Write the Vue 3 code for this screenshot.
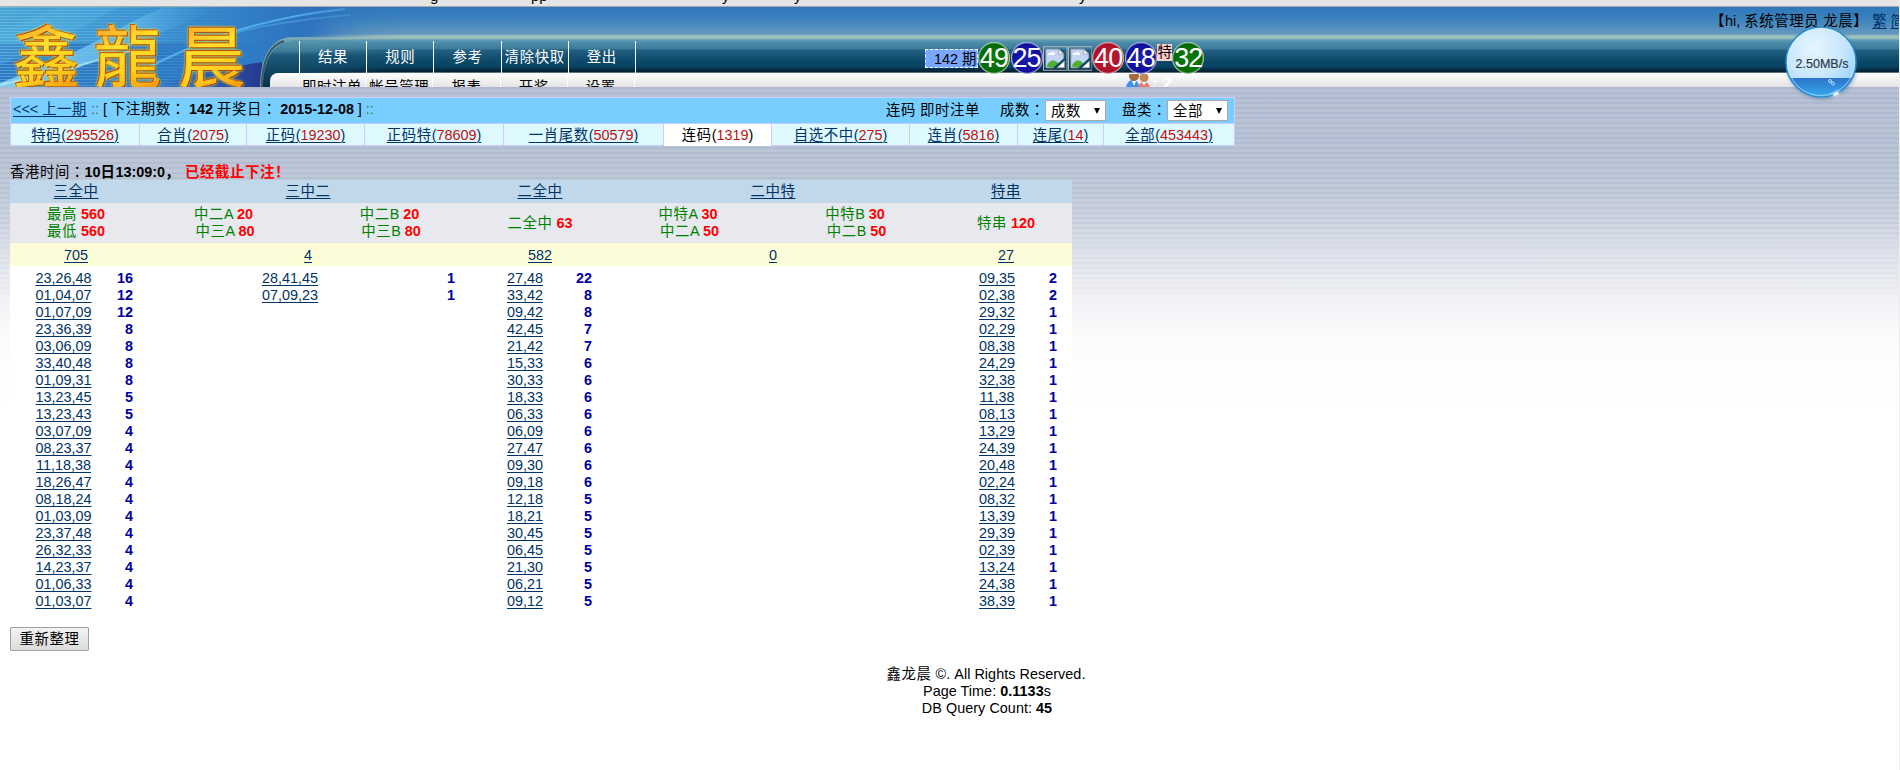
<script setup>
import { h } from 'vue'

// Wraps runs of Chinese characters so that they get their own tracking; colons sit mid-cell.
const T = (props) =>
  props.s.split(/(：|[\u2e80-\u9fff\uff00-\uff19\uff1b-\uffef]+)/).filter(Boolean).map((run) =>
    run === '：' ? h('span', { class: 'zh colon' }, run)
      : /[\u2e80-\uffef]/.test(run) ? h('span', { class: 'zh' }, run) : run
  )
T.props = ['s']

const nav = ['结果', '规则', '参考', '清除快取', '登出']
const subnav = ['即时注单', '帐号管理', '报表', '开奖', '设置']

const balls = [
  { n: '49', c: 'green' }, { n: '25', c: 'blue' }, { broken: true }, { broken: true },
  { n: '40', c: 'red' }, { n: '48', c: 'blue' }, { special: true }, { n: '32', c: 'green' },
]

const tabs = [
  ['特码', 295526], ['合肖', 2075], ['正码', 19230], ['正码特', 78609], ['一肖尾数', 50579],
  ['连码', 1319], ['自选不中', 275], ['连肖', 5816], ['连尾', 14], ['全部', 453443],
]

const heads = [['三全中', '705'], ['三中二', '4'], ['二全中', '582'], ['二中特', '0'], ['特串', '27']]

const odds = [
  [[['最高', 560], ['最低', 560]]],
  [[['中二A', 20], ['中三A', 80]], [['中二B', 20], ['中三B', 80]]],
  [[['二全中', 63]]],
  [[['中特A', 30], ['中二A', 50]], [['中特B', 30], ['中二B', 50]]],
  [[['特串', 120]]],
]

const pairs = (s) => s.split(' ').map((p) => p.split('='))
const lists = [
  pairs('23,26,48=16 01,04,07=12 01,07,09=12 23,36,39=8 03,06,09=8 33,40,48=8 01,09,31=8 13,23,45=5 13,23,43=5 03,07,09=4 08,23,37=4 11,18,38=4 18,26,47=4 08,18,24=4 01,03,09=4 23,37,48=4 26,32,33=4 14,23,37=4 01,06,33=4 01,03,07=4'),
  pairs('28,41,45=1 07,09,23=1'),
  pairs('27,48=22 33,42=8 09,42=8 42,45=7 21,42=7 15,33=6 30,33=6 18,33=6 06,33=6 06,09=6 27,47=6 09,30=6 09,18=6 12,18=5 18,21=5 30,45=5 06,45=5 21,30=5 06,21=5 09,12=5'),
  [],
  pairs('09,35=2 02,38=2 29,32=1 02,29=1 08,38=1 24,29=1 32,38=1 11,38=1 08,13=1 13,29=1 24,39=1 20,48=1 02,24=1 08,32=1 13,39=1 29,39=1 02,39=1 13,24=1 24,38=1 38,39=1'),
]
</script>

<template>
  <div class="page">
    <div class="chrome">
      <svg width="1900" height="6" class="remnant">
        <text x="430" y="1">g</text><text x="531" y="1">pp</text>
        <text x="722" y="1">y</text><text x="794" y="1">y</text><text x="1079" y="1">y</text>
      </svg>
    </div>

    <header class="top">
      <svg class="banner" width="420" height="80" viewBox="0 0 420 80">
        <defs>
          <linearGradient id="sky" x1="0" y1="0" x2="1" y2="0">
            <stop offset="0" stop-color="#4aa3d6" /><stop offset=".35" stop-color="#3a92d2" />
            <stop offset=".75" stop-color="#2c70bd" /><stop offset="1" stop-color="#2f78bb" stop-opacity="0" />
          </linearGradient>
          <linearGradient id="deep" x1="0" y1="0" x2="1" y2="0">
            <stop offset="0" stop-color="#2f80c8" /><stop offset="1" stop-color="#26388f" />
          </linearGradient>
          <linearGradient id="ray" x1="0" y1="0" x2="1" y2="0">
            <stop offset="0" stop-color="#8fe0fa" /><stop offset=".6" stop-color="#5fb6e8" />
            <stop offset="1" stop-color="#3a86cc" stop-opacity="0" />
          </linearGradient>
          <linearGradient id="gold" x1="0" y1="0" x2="0.25" y2="1">
            <stop offset="0" stop-color="#fff6e6" /><stop offset=".3" stop-color="#ffb02a" />
            <stop offset=".5" stop-color="#ffe02c" /><stop offset=".8" stop-color="#ffcf1c" />
            <stop offset="1" stop-color="#f59a12" />
          </linearGradient>
          <linearGradient id="panel" x1="0" y1="0" x2="0" y2="1">
            <stop offset="0" stop-color="#5b98b0" /><stop offset=".24" stop-color="#3d7c99" />
            <stop offset=".32" stop-color="#1e5a7a" /><stop offset="1" stop-color="#04304a" />
          </linearGradient>
          <pattern id="lines" width="4" height="3" patternUnits="userSpaceOnUse">
            <rect width="4" height="1" fill="#8fdcee" opacity=".38" />
          </pattern>
          <linearGradient id="fade" x1="0" y1="0" x2="1" y2="0">
            <stop offset="0" stop-color="#fff" /><stop offset="1" stop-color="#000" />
          </linearGradient>
          <mask id="fadeMask"><rect width="260" height="80" fill="url(#fade)" /></mask>
        </defs>
        <rect width="420" height="36" fill="url(#sky)" />
        <rect y="36" width="275" height="44" fill="#2e7ac4" />
        <path d="M150 80 C180 70 220 62 262 55 V80Z" fill="url(#deep)" />
        <path d="M0 76 C50 58 95 36 130 16 C145 8 155 4 165 0 H225 C160 24 90 58 30 80 H0Z" fill="url(#ray)" opacity=".8" />
        <path d="M0 58 C50 40 90 14 120 0 H60 L0 24Z" fill="#57b4e4" opacity=".35" />
        <path d="M130 70 C190 38 250 12 345 2" fill="none" stroke="#58b8ee" stroke-width="2" opacity=".8" />
        <path d="M150 58 C220 26 260 16 350 8" fill="none" stroke="#58aee4" stroke-width="1.5" opacity=".55" />
        <path d="M0 78 C60 64 90 56 130 44" fill="none" stroke="#c8f4ff" stroke-width="2" opacity=".6" />
        <rect width="260" height="80" fill="url(#lines)" mask="url(#fadeMask)" />
        <path d="M260 80 C260 50 272 30 292 30 H420 V80Z" fill="#8fb8b4" opacity=".75" />
        <path d="M263 80 C263 52 274 34 294 33 H420 V80Z" fill="url(#panel)" />
        <path d="M262 80 C262 54 270 38 284 34" fill="none" stroke="#1f3437" stroke-width="2" opacity=".7" />
        <g class="brand">
          <text x="13" y="75">鑫</text><text x="94" y="75">龍</text><text x="178" y="75">晨</text>
        </g>
      </svg>

      <div class="menu">
        <ul class="nav"><li v-for="n in nav" :key="n"><T :s="n" /></li></ul>
        <ul class="subnav"><li v-for="n in subnav" :key="n"><T :s="n" /></li></ul>
      </div>

      <div class="draw">
        <span class="term"><T s="142 期" /></span>
        <template v-for="(b, i) in balls" :key="i">
          <span v-if="b.special" class="special">特</span>
          <svg v-else-if="b.broken" class="broken" width="24.500" height="25" viewBox="0 0 25 25">
            <rect x=".5" y=".5" width="24" height="24" fill="none" stroke="#b4bcc0" />
            <path d="M3 3 H16 L21 8 V15 L11 22 H3Z" fill="#c3d5f7" stroke="#a5a9b0" />
            <path d="M16 3 V8 H21Z" fill="#fff" stroke="#999" stroke-width=".8" />
            <path d="M5 9 a2 2 0 0 1 3-2 a2 2 0 0 1 4 2Z" fill="#fff" />
            <path d="M4 21 C5 14 12 12 16 18 L11 22Z" fill="#4fae36" />
            <path d="M14 22 L22 15 V22Z" fill="#fff" stroke="#999" stroke-width=".8" />
            <path d="M11 23 L22 13" stroke="#0d4563" stroke-width="2" />
          </svg>
          <span v-else class="ball" :class="b.c">{{ b.n }}</span>
        </template>
      </div>

      <div class="online">
        <svg width="25" height="16" viewBox="0 0 25 16">
          <path d="M0 16 C0 9 3 6 7 6 C11 6 13 9 14 16Z" fill="#3e8ff0" />
          <path d="M6 7 L8 12 L10 7Z" fill="#fff" />
          <circle cx="8" cy="2" r="5" fill="#a46a40" />
          <path d="M12 16 C12 10 15 8 18 8 C22 8 24 11 24 16Z" fill="#f4766a" />
          <path d="M16 8 L18 12 L20 8Z" fill="#fff" />
          <circle cx="18" cy="3.500" r="4.500" fill="#c08a58" />
        </svg>
        <b>: 2</b>
      </div>

      <div class="user">
        <T s="【hi, 系统管理员 龙晨】" /><a class="lang">繁</a><a class="lang">简</a>
      </div>
    </header>

    <svg class="meter" width="84" height="84" viewBox="0 0 84 84">
      <defs>
        <radialGradient id="glass" cx=".4" cy=".3" r=".75">
          <stop offset="0" stop-color="#e6f5ff" /><stop offset=".55" stop-color="#c9e7fe" />
          <stop offset="1" stop-color="#8fcffa" />
        </radialGradient>
        <linearGradient id="water" x1="0" y1="0" x2="0" y2="1">
          <stop offset="0" stop-color="#2f73c8" /><stop offset="1" stop-color="#35b4f4" />
        </linearGradient>
        <filter id="soft" x="-20%" y="-20%" width="140%" height="140%"><feGaussianBlur stdDeviation="2" /></filter>
        <clipPath id="disc"><circle cx="42" cy="41" r="34.500" /></clipPath>
      </defs>
      <circle cx="43" cy="43" r="35" fill="#28648a" opacity=".5" filter="url(#soft)" />
      <circle cx="42" cy="41" r="35" fill="url(#glass)" stroke="#2a8cd0" stroke-width="1.500" />
      <rect x="6" y="57" width="72" height="22" fill="url(#water)" clip-path="url(#disc)" />
      <circle cx="42" cy="41" r="33.500" fill="none" stroke="#d4f0ff" stroke-opacity=".6" />
      <circle cx="51" cy="60" r="1.500" fill="none" stroke="#bfe6ff" /><circle cx="54" cy="62.500" r="1.500" fill="none" stroke="#bfe6ff" />
      <ellipse cx="57" cy="73" rx="4" ry="2.500" fill="#fff" opacity=".7" transform="rotate(-25 57 73)" filter="url(#soft)" />
      <ellipse cx="57" cy="73" rx="3" ry="1.500" fill="#fff" opacity=".8" transform="rotate(-25 57 73)" />
      <text x="16.500" y="47" textLength="53" lengthAdjust="spacingAndGlyphs">2.50MB/s</text>
    </svg>

    <main>
      <section class="filters">
        <div class="bar">
          <div class="issue">
            <a><T s="<<< 上一期" /></a> <span class="dots">::</span> [ <T s="下注期数：" /> <b>142</b> <T s="开奖日：" /> <b>2015-12-08</b> ] <span class="dots">::</span>
          </div>
          <div class="picks">
            <span class="what"><T s="连码 即时注单" /></span>
            <label><T s="成数：" /></label><span class="select"><T s="成数" /><i></i></span>
            <label class="kind"><T s="盘类：" /></label><span class="select"><T s="全部" /><i></i></span>
          </div>
        </div>
        <div class="tabs">
          <div v-for="t in tabs" :key="t[0]" class="tab" :class="{ active: t[0] === '连码' }">
            <a><T :s="t[0]" />(<span class="amount">{{ t[1] }}</span>)</a>
          </div>
        </div>
      </section>

      <p class="clock"><T s="香港时间：" /><b class="time"><T s="10日13:09:0，" /></b> <b class="closed"><T s="已经截止下注！" /></b></p>

      <section class="board">
        <div class="row head"><div v-for="c in heads" :key="c[0]"><a><T :s="c[0]" /></a></div></div>
        <div class="row odds">
          <div v-for="(groups, i) in odds" :key="i">
            <div v-for="(g, j) in groups" :key="j" class="group" :class="{ split: groups.length > 1 }">
              <p v-for="o in g" :key="o[0]"><T :s="o[0]" /> <b>{{ o[1] }}</b></p>
            </div>
          </div>
        </div>
        <div class="row sums"><div v-for="c in heads" :key="c[0]"><a>{{ c[1] }}</a></div></div>
        <div class="row lists">
          <ul v-for="(list, i) in lists" :key="i" :class="'list' + i">
            <li v-for="p in list" :key="p[0]"><span><a>{{ p[0] }}</a></span><b>{{ p[1] }}</b></li>
          </ul>
        </div>
      </section>

      <button type="button"><T s="重新整理" /></button>

      <footer>
        <p><T s="鑫龙晨 ©. All Rights Reserved." /></p>
        <p>Page Time: <b>0.1133</b>s</p>
        <p>DB Query Count: <b>45</b></p>
      </footer>
    </main>
  </div>
</template>

<style>
html, body { margin: 0; background: #fff; overflow: hidden; }
.zh { letter-spacing: 0.6px; }
.zh.colon { font-family: "Noto Sans CJK TC", sans-serif; letter-spacing: 0; line-height: 0; }
</style>

<style scoped>
.page {
  position: relative; width: 1899px; height: 770px; overflow: hidden; border-right: 1px solid #eceded;
  font: 14.4px/17px "Liberation Sans", "Noto Sans CJK SC", sans-serif; color: #000;
}
p, ul { margin: 0; padding: 0; list-style: none; }
a { color: #003366; text-decoration: underline; text-underline-offset: 2px; text-decoration-thickness: 1px; }

.chrome { height: 6px; background: #e5e5e5; border-bottom: 1px solid #a9a9a9; }
.remnant { display: block; overflow: hidden; font-size: 15px; }

.top {
  position: relative; height: 80px; overflow: hidden;
  background: linear-gradient(#2f78bb 0, #3b82bd 12px, #6599c0 27px, #9dc0bd 29px, #a2c3bb 31px, #609ab2 33px,
    #4a8aa8 36px, #3b7a98 42px, #235f80 43px, #0c4868 54px, #084360 60px, #052f48 62px, #04202f 65px,
    #b9c4c9 66px, #fff 67px, #e6e6e6 80px);
}
.banner { position: absolute; left: 0; top: 0; -webkit-mask: linear-gradient(90deg, #000 300px, transparent 400px); mask: linear-gradient(90deg, #000 300px, transparent 400px); }
.brand text {
  font: 67px "Noto Sans CJK TC", sans-serif; fill: url(#gold); stroke: #ffd52a; stroke-width: .4px;
  filter: drop-shadow(-.5px -.5px 0 #c04a08) drop-shadow(1px 1px 0 #a84408) drop-shadow(0 0 1px #f4e62c);
}
.menu { position: absolute; left: 270px; top: 34px; width: 1630px; }
.nav { display: flex; height: 32px; margin-left: 29px; border-left: 1px solid #fff; box-sizing: border-box; }
.nav li { width: 67.2px; box-sizing: border-box; border-right: 1px solid #fff; color: #fff; text-align: center; line-height: 32px; white-space: nowrap; }
.subnav { display: flex; height: 20px; padding-left: 29px; border-radius: 8px 0 0 0; background: linear-gradient(#fff, #e4e4e4 14px); }
.subnav li { width: 67.2px; box-sizing: border-box; border-right: 1px solid #fff; text-align: center; line-height: 28px; white-space: nowrap; }

.draw { position: absolute; left: 925px; top: 35px; display: flex; align-items: center; }
.draw > * { flex: none; }
.term { width: 53px; height: 19px; box-sizing: border-box; border: 1px dashed #fff; background: #7aa7ff; line-height: 18px; text-align: right; white-space: nowrap; }
.ball {
  width: 32px; height: 32px; margin-right: .6px; border-radius: 50%; color: #fff; text-align: center;
  font-size: 27px; line-height: 33px; letter-spacing: -.8px; box-sizing: border-box;
}
.green { background: radial-gradient(circle closest-side at 50% 50%, #0a7c0a, #056905 88%, #d0e6d0 100%); }
.blue { background: radial-gradient(circle closest-side at 50% 50%, #1c1cb0, #10109a 88%, #d0d0ee 100%); }
.red { background: radial-gradient(circle closest-side at 50% 50%, #c01c30, #ab1226 88%, #eed0d4 100%); }
.special { width: 15px; height: 17px; margin-bottom: 12px; background: #fcc; font-size: 14.4px; line-height: 16px; }
.online { position: absolute; left: 1126px; top: 67px; display: flex; gap: 1px; }
.online b { color: #fff; font-size: 17px; line-height: 20px; white-space: nowrap; }
.user { position: absolute; left: 1710px; top: 6px; white-space: nowrap; }
.lang { margin-left: 4px; }
.meter { position: absolute; left: 1779px; top: 21px; }
.meter text { font: 13.500px "Liberation Sans", sans-serif; fill: #2b3b48; stroke: #2b3b48; stroke-width: .2px; }

main {
  height: 683px; box-sizing: border-box; padding: 10px 0 0 10px;
  background:
    repeating-linear-gradient(rgba(120,125,180,.08) 0 2px, rgba(255,255,255,.06) 2px 5px) 0 0 / 100% 150px no-repeat,
    repeating-linear-gradient(rgba(120,125,180,.04) 0 2px, rgba(255,255,255,.04) 2px 5px) 0 150px / 100% 60px no-repeat,
    linear-gradient(#b4bdd2 0, #b5c1d3 60px, #bbc6d6 95px, #c6cedb 123px, #d2d8e3 145px, #e0e4ec 175px,
      #ecedf1 198px, #f4f5f8 222px, #fbfbfb 250px, #fdfdfd 275px, #fff 315px);
}
.filters { width: 1225px; height: 49px; box-sizing: border-box; border: 1px solid #c9ccff; }
.bar { display: flex; justify-content: space-between; height: 25px; background: #78cfff; border-bottom: 1px solid #c9ccff; line-height: 23px; }
.issue { padding-left: 2px; word-spacing: -.1px; }
.dots { color: #526b3c; }
.picks { display: flex; align-items: center; padding-right: 6px; }
.what { margin-right: 20px; }
.picks label { width: 45px; white-space: nowrap; }
.picks .kind { margin-left: 16px; }
.select { position: relative; width: 61px; height: 21px; box-sizing: border-box; padding-left: 5px; border: 1px solid #a9a9a9; background: #fff; line-height: 20px; }
.select i { position: absolute; right: 5px; top: 7px; border: solid transparent; border-width: 6px 3px 0; border-top-color: #000; }
.tabs { display: grid; grid-template-columns: 129px 107px 118px 139px 160px 108px 138px 108px 86px 130px; height: 21px; background: #dffaff; }
.tab { border-right: 1px solid #c9ccff; text-align: center; line-height: 22px; white-space: nowrap; }
.tab:last-child { border-right: 0; }
.active { background: #fff; }
.active a { color: #000; text-decoration: none; }
.amount { color: #c01010; }
.clock { height: 17px; margin-top: 17px; white-space: nowrap; line-height: 18px; }
.time { margin-right: 1px; }
.closed { color: #f00; }

.board { width: 1062px; height: 432px; background: #fff; }
.row { display: grid; grid-template-columns: 132px 332px 132px 334px 132px; text-align: center; }
.head { height: 23px; background: #c1d7ea; line-height: 23px; }
.odds { height: 40px; box-sizing: border-box; background: #e7e9ee; color: #008000; }
.odds > div { display: flex; align-items: center; }
.group { flex: 1; }
.group.split p:first-child { padding-right: 3px; }
.odds b { color: #f00; }
.sums { height: 23px; background: #fcfcd8; line-height: 24px; }
.lists { padding-top: 4px; }
.lists li { display: flex; justify-content: space-between; }
.lists b { color: #0000a0; }
.lists span { flex: none; }
.list0 { padding-right: 9px; } .list0 span { width: 107px; }
.list1 { padding-right: 19px; } .list1 span { width: 296px; }
.list2 { padding-right: 14px; } .list2 span { width: 102px; }
.list4 { padding-right: 15px; } .list4 span { width: 104px; padding-left: 5px; }

button {
  display: block; width: 79px; height: 24px; margin-top: 15px; padding: 0; border: 1px solid #a0a0a0; border-radius: 1px;
  background: linear-gradient(#f3f3f3, #dcdcdc); color: #000; font: inherit; white-space: nowrap;
}
footer { width: 1954px; margin-top: 15px; text-align: center; letter-spacing: .04px; }
footer p:first-child { padding-right: 2px; }
</style>
